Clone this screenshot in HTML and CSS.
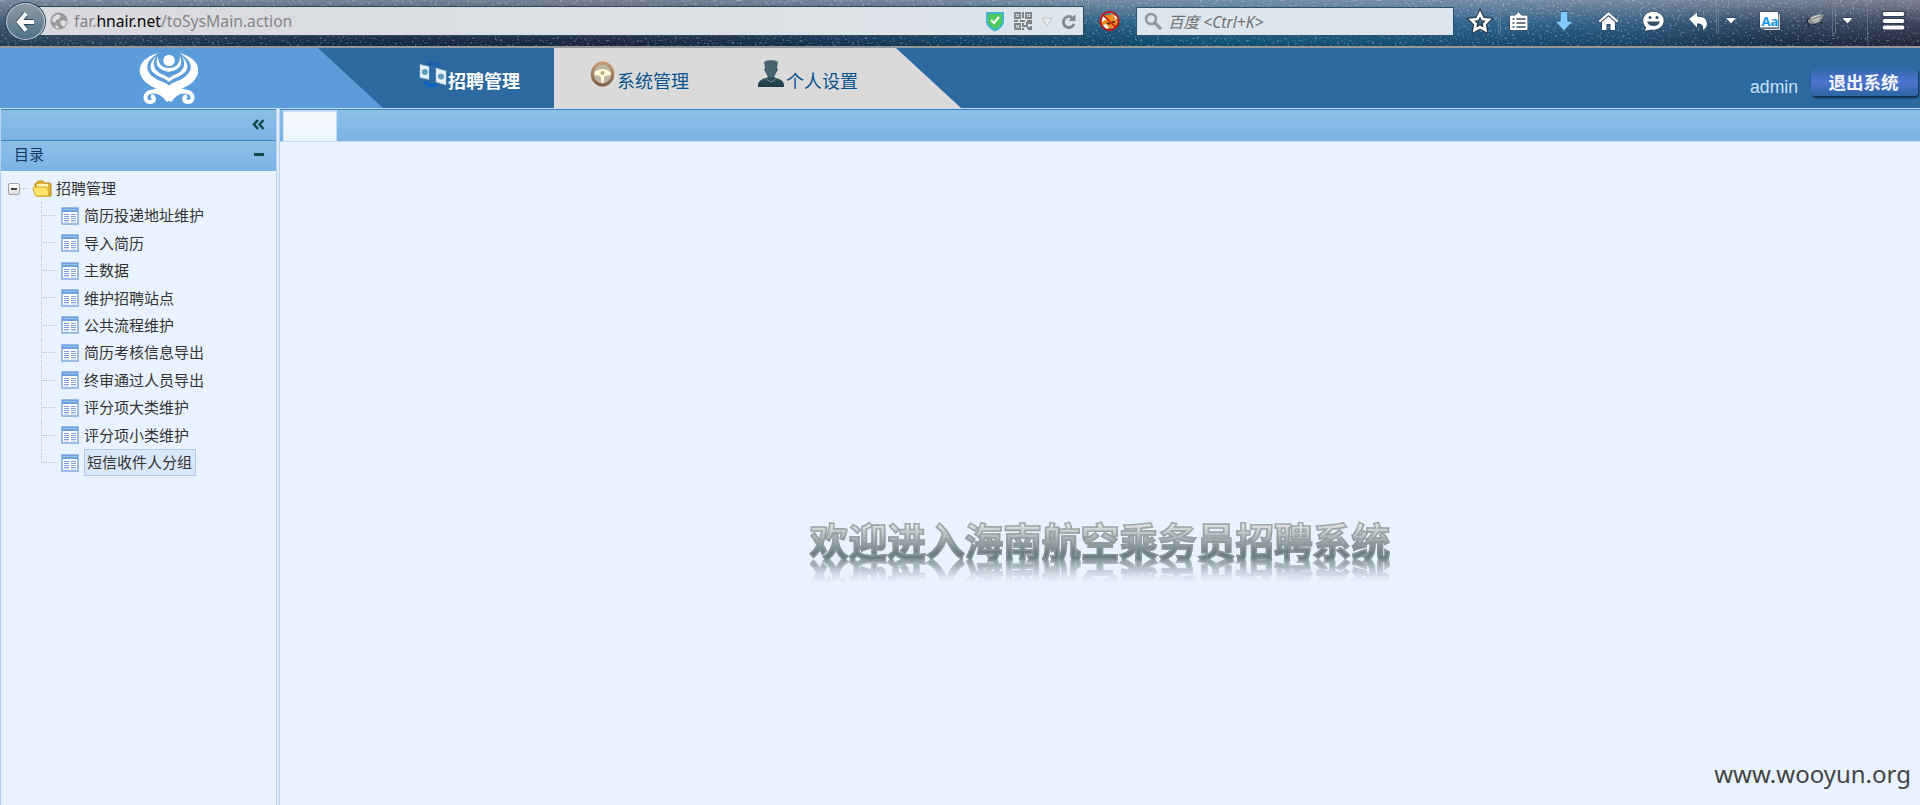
FILE: index.html
```html
<!DOCTYPE html>
<html lang="zh-CN">
<head>
<meta charset="utf-8">
<title>招聘管理</title>
<link rel="stylesheet" href="styles.css">
</head>
<body>
<svg class="defs" width="0" height="0">
  <defs>
    <symbol id="table" viewBox="0 0 18 18">
      <rect x="1" y="1" width="16" height="16" fill="#fff" stroke="#86aee2" stroke-width="1.6"/>
      <rect x="1" y="1" width="16" height="4" fill="#6c9fdd"/><path d="M2 2.500h14" stroke="#9cc2ef"/>
      <path d="M3 7.500h5M10 7.500h5M3 9.500h5M10 9.500h5M3 11.500h5M10 11.500h5M3 13.500h5M10 13.500h5" stroke="#7c9fd9"/>
      <path d="M3 15h5M10 15h5" stroke="#b9cdee"/>
    </symbol>
    <filter id="stars" x="0" y="0" width="100%" height="100%">
      <feTurbulence type="fractalNoise" baseFrequency="0.4" numOctaves="3" seed="8"/>
      <feColorMatrix values="0 0 0 0 .75  0 0 0 0 .88  0 0 0 0 1  5 3 0 0 -4.500"/>
    </filter>
    <linearGradient id="wheel" x2="0" y2="1"><stop stop-color="#c79b73"/><stop offset="1" stop-color="#7e5f45"/></linearGradient>
    <linearGradient id="suit" x2="0" y2="1"><stop stop-color="#4a6d7b"/><stop offset="1" stop-color="#1d3c46"/></linearGradient>
  </defs>
</svg>
<div class="browser">
  <svg class="sky" width="1920" height="46"><rect width="1920" height="46" filter="url(#stars)"/></svg>
  <div class="toolbar">
    <div class="back"><svg width="20" height="22" viewBox="0 0 20 22"><path d="M9.500 3 3 11l6.500 8M4 11h14" fill="none" stroke="#2e4a60" stroke-width="6"/><path d="M10 2.500 3 11l7 8.500M4 11h14" fill="none" stroke="#fff" stroke-width="4.200"/></svg></div>
    <div class="url">
      <svg class="globe" width="18" height="18" viewBox="0 0 18 18"><circle cx="9" cy="9" r="8.600" fill="#999"/><path d="M3 5 8 2l3 2-2 3-3 1-1 3-3-2zM10 9l4-1 3 2-3 5-3-2zM5 13l3 1 1 3-3-1z" fill="#dcdde0"/></svg>
      <span class="address">far.<b>hnair.net</b>/toSysMain.action</span>
      <svg class="urlicons" width="92" height="22" viewBox="0 0 92 22">
        <path d="M0 2h18v10q-1 6-9 9.500Q1 18 0 12z" fill="#3fb6d0"/><path d="M2 4h14v8q-1 4-7 7Q3 16 2 12z" fill="#4fc959"/><path d="m5 10 3 3 5-6" fill="none" stroke="#fff" stroke-width="2"/>
        <g fill="none" stroke="#7d8387" stroke-width="1.800"><path d="M29 3h5v5h-5zM40 3h5v5h-5zM29 14h5v5h-5z"/><path d="M37 2v6M28 11h4m2 0h5m2 0h5M37 13v3h4v-3h5M37 18v2m4-2h2v2m2-4v4" stroke-width="2"/></g><path d="M30.700 4.700h1.600v1.600h-1.600zM41.700 4.700h1.600v1.600h-1.600zM30.700 15.700h1.600v1.600h-1.600z" fill="#7d8387"/>
        <path d="m56 8 5 8.500 5-8.500z" fill="#e8ebee" stroke="#c0c2c6"/>
        <path d="M86 7.500A5.500 5.500 0 1 0 88 14" fill="none" stroke="#858b90" stroke-width="3"/><path d="M89.500 4v7h-7z" fill="#858b90"/>
      </svg>
    </div>
    <svg class="fox" width="22" height="22" viewBox="0 0 22 22"><path d="M3 8q3-4 7-3l3-1 5 2 1 7-4 5-8 1-5-6z" fill="#f08920"/><path d="m4 6 4 3-5 3zm10-1 4 2-1 3zM4 15l3-1 3 4-3 1z" fill="#fff"/><path d="m8 13 3 1m2-2h3" stroke="#40260f" stroke-width="1.500"/><circle cx="10.500" cy="11" r="9.200" fill="none" stroke="#cb1010" stroke-width="1.700"/><path d="m4 5 13 12.500" stroke="#cb1010" stroke-width="1.700"/></svg>
    <div class="search"><svg width="20" height="20" viewBox="0 0 20 20"><circle cx="7" cy="7" r="5" fill="none" stroke="#96999c" stroke-width="2.600"/><path d="m11 11 6 6" stroke="#96999c" stroke-width="3.200"/></svg><i>百度 &lt;Ctrl+K&gt;</i></div>
    <svg class="tools" width="450" height="46" viewBox="1465 0 450 46">
      <g stroke="#26384d" stroke-width="1" paint-order="stroke">
        <path d="m1480 13.500 2.700 5.500 6 .8-4.300 4.200 1 6-5.400-2.900-5.400 2.900 1-6-4.300-4.200 6-.8z" fill="none" stroke-width="5"/><path d="m1480 13.500 2.700 5.500 6 .8-4.300 4.200 1 6-5.400-2.900-5.400 2.900 1-6-4.300-4.200 6-.8z" fill="none" stroke="#fff" stroke-width="2.700"/>
        <path d="M1510 15.500h5l2-1.500 1.500-2 1.500 2 2 1.500h5.500v14.500h-17.500z" fill="#fff"/><path d="M1512.500 19h2m2 0h9m-13 4h2m2 0h9m-13 4h2m2 0h9" stroke="#3d5265" stroke-width="1.600"/>
        <path d="M1560.500 12h7v9.500h5l-8.500 9-8.500-9h5z" fill="#80caff"/>
        <path d="m1608.500 12 10 9-1.500 1.500-8.500-7.500-8.500 7.500-1.500-1.500zM1602 22l6.500-5.500L1615 22v8h-4.500v-6h-4v6h-4.500z" fill="#fff"/>
        <path d="M1644.500 30.500q2-2 1.500-3.500a10.300 9 0 1 1 5 2.500q-3 1-6.500 1z" fill="#fff"/><g fill="#31506a" stroke="none"><circle cx="1650" cy="17.500" r="1.500"/><circle cx="1657" cy="17.500" r="1.500"/><path d="M1647 21.500h13q-1.500 4.500-6.500 4.500t-6.500-4.500z"/></g>
        <path d="m1689 19 8-6.500v4q10 0 10 7 0 4-4 6.500 1.500-7-6-6.500v4z" fill="#fff"/>
        <path d="M1726 18h10l-5 5.500zM1842.500 18h10l-5 5.500z" fill="#fff"/>
        <path d="M1762 14h18v16h-16z" fill="#d5dade"/><path d="M1760 12h18v15.500h-18z" fill="#fff"/><path d="M1761 28.500h17.500V14" fill="none" stroke="#68747e"/>
        <path d="M1884 14h19M1884 21h19M1884 27.500h19" stroke-width="5.500" stroke-linecap="round"/><path d="M1884.500 14h18M1884.500 21h18M1884.500 27.500h18" stroke="#fff" stroke-width="3.800" stroke-linecap="round"/>
      </g>
      <text x="1761.500" y="25.500" class="aa">Aa</text>
      <path d="m1808 19 6-4 8-1 1 3-3 5-7 2-5-1z" fill="#8d908f"/><path d="m1811 18 9-3m-8 6 8-3m-6 5 5-3" stroke="#e4e4df"/><path d="m1809 23-1 5m5-4 3 1m4-3 3 2M1810 18l-3 2 1 3" stroke="#1b2025" fill="none"/>
      <path d="M1498.500 9v24.500h2V9zM1716.500 9v24.500h2V9zM1832.500 9v24.500h3V9z" fill="none" stroke="#7c8e9c" opacity=".6"/><path d="M1867.500 0v42" stroke="#a0aab4" opacity=".35"/>
    </svg>
  </div>
</div>
<header class="banner">
  <svg class="shape" width="961" height="60"><path d="M0 0h318l65 60H0z" fill="#5b9cda"/><path d="M554 0h342l65 60H554z" fill="#dadada"/></svg>
  <div class="brand"><svg width="60" height="56" viewBox="0 0 60 56">
    <g fill="#fff"><circle cx="31" cy="10.500" r="5.800"/>
    <path d="M21 3C-4 9-4 29 17 38c7 3 11 6 13.800 11.500C33.500 44 38 41 45 38 66 29 66 9 41 3c15 8 16 19 1 27-5 2-8 3-11 5.500C28 33 25 32 20 30 5 22 6 11 21 3z"/>
    <path d="M18 6C7 18 14 24 27 29l4 3 4-3C48 24 55 18 44 6c5 10 1 16-9 19.500l-4 2.500-4-2.500C17 22 13 16 18 6z"/>
    <path d="M20 6c-4 9 1 14 11 16 10-2 15-7 11-16 0 8-4 12-11 12S20 14 20 6z"/></g>
    <path d="M29 47q-5-7-13-6M33 47q5-7 13-6" fill="none" stroke="#fff" stroke-width="4"/>
    <path d="M30.500 51Q24 41 15 41.500c-9 .5-10 10.500-3 10.500 5 0 5-5 1-6M31.500 51Q38 41 47 41.500c9 .5 10 10.500 3 10.500-5 0-5-5-1-6" fill="none" stroke="#fff" stroke-width="4"/>
  </svg></div>
  <nav class="menu">
    <a class="active"><svg width="28" height="26" viewBox="0 0 28 26"><path d="M8 3q7-5 13 2" fill="none" stroke="#1c5fae" stroke-width="3"/><path d="M6 20q5 6 12 2" fill="none" stroke="#0863ca" stroke-width="3"/><path d="m1 2.500 9 2v13l-9-2zM17 6l10 3v14l-10-3z" fill="#e8f2f8" stroke="#a8c1d6" stroke-width=".6"/><circle cx="5.800" cy="10" r="3" fill="#5c9ebc"/><circle cx="22" cy="14.500" r="3" fill="#5c9ebc"/></svg><span>招聘管理</span></a>
    <a class="system"><svg width="26" height="28" viewBox="0 0 26 28"><ellipse cx="13" cy="16" rx="10.500" ry="11" fill="#999" opacity=".35"/><ellipse cx="12.500" cy="14" rx="10.300" ry="11" fill="#bcb3a5" stroke="url(#wheel)" stroke-width="3"/><path d="M4.500 12q8-6 16 0v3l-6 1-1 7h-2l-1-7-6-1z" fill="#fffbd7"/><circle cx="12.500" cy="13" r="2" fill="#b5aa8a"/></svg><span>系统管理</span></a>
    <a class="personal"><svg width="28" height="30" viewBox="0 0 28 30"><path d="M1 28q-1-7 8-9l2-1-1-2-2-4-1-1 1-2-1-6q2-2 7-2t7 2l-1 6 1 2-1 1-2 4-1 2 2 1q9 2 8 9z" fill="url(#suit)"/><path d="M10 3q4-2 8 0l1 9-2 5q-3 2-6 0l-2-5z" fill="#47636c"/><path d="m9 20 5 3 5-3" fill="none" stroke="#6b8992"/></svg><span>个人设置</span></a>
  </nav>
  <div class="account"><span>admin</span><button>退出系统</button></div>
</header>
<div class="workspace">
  <aside>
    <div class="bar"><svg width="13" height="11" viewBox="0 0 13 11"><path d="M6 1 2 5.500 6 10M11.500 1l-4 4.500 4 4.500" fill="none" stroke="#13494d" stroke-width="2.500"/></svg></div>
    <div class="bar catalog"><span>目录</span><i></i></div>
    <div class="tree">
      <div class="root"><span class="toggle"></span><span class="dots"></span><svg width="21" height="18" viewBox="0 0 21 18"><path d="M3 4q0-1 2-1l1-2h5l1 2h5q2 0 2 2v11H4z" fill="#e5b42d" stroke="#b78916"/><path d="M5 4h11v4H5z" fill="#fff5b4"/><path d="m1 8 1-1h13l1 2 1 6-1 1H4l-1-1z" fill="#ffe66b" stroke="#d6a624"/></svg><span>招聘管理</span></div>
      <ul>
        <li><svg><use href="#table"/></svg><span>简历投递地址维护</span></li>
        <li><svg><use href="#table"/></svg><span>导入简历</span></li>
        <li><svg><use href="#table"/></svg><span>主数据</span></li>
        <li><svg><use href="#table"/></svg><span>维护招聘站点</span></li>
        <li><svg><use href="#table"/></svg><span>公共流程维护</span></li>
        <li><svg><use href="#table"/></svg><span>简历考核信息导出</span></li>
        <li><svg><use href="#table"/></svg><span>终审通过人员导出</span></li>
        <li><svg><use href="#table"/></svg><span>评分项大类维护</span></li>
        <li><svg><use href="#table"/></svg><span>评分项小类维护</span></li>
        <li><svg><use href="#table"/></svg><span class="selected">短信收件人分组</span></li>
      </ul>
    </div>
  </aside>
  <main>
    <div class="tabs"><div class="tab"></div></div>
    <div class="content"><h1>欢迎进入海南航空乘务员招聘系统</h1></div>
    <div class="watermark">www.wooyun.org</div>
  </main>
</div>
</body>
</html>
```
FILE: styles.css
```css
* { box-sizing: border-box; }
body { margin: 0; width: 1920px; height: 805px; overflow: hidden; background: #e9f3ff; font-family: "Noto Sans", "Noto Sans CJK SC", sans-serif; color: #333; }
.defs { position: absolute; }
svg { flex-shrink: 0; }
.browser { position: relative; height: 48px; border-bottom: 2px solid #999; overflow: hidden; background: linear-gradient(180deg, rgba(150,155,172,.75), rgba(85,102,128,.35) 50%, rgba(0,8,25,.3)), linear-gradient(90deg, #34536b, #173452 20%, #25304a 32%, #155077 50%, #146b96 64%, #1d6597 76%, #225a83 85%, #203b58 92%, #323247); }
.sky { position: absolute; left: 0; top: 0; opacity: .28; }
.toolbar { position: relative; display: flex; height: 46px; }
.back { z-index: 1; margin: 3px 0 0 6px; width: 39px; height: 37px; border-radius: 50%; background: linear-gradient(#9299a4, #4d7287); border: 1px solid #bfc7d0; box-shadow: 0 0 0 1px #25405a; display: flex; align-items: center; justify-content: center; }
.url { margin: 7px 0 0 -6px; width: 1044px; height: 28px; background: linear-gradient(90deg, #d8dade, #dde0e4 65%, #dce6ed); box-shadow: 0 0 0 1px #314859; display: flex; align-items: center; padding-left: 11px; }
.address { margin-left: 6px; font-size: 15.7px; line-height: 26px; color: #858585; white-space: nowrap; }
.address b { font-weight: 400; color: #080808; }
.urlicons { margin-left: auto; margin-right: 5px; }
.fox { margin: 10px 0 0 16px; }
.search { margin: 8px 0 0 16px; width: 316px; height: 27px; background: #dce6ef; box-shadow: 0 0 0 1px #31506b; display: flex; align-items: center; padding-left: 7px; font-size: 15.6px; color: #707173; }
.search i { margin-left: 4px; }
.tools { margin-left: 12px; }
.aa { font: bold 13px "Noto Sans", sans-serif; fill: #1595ed; }
.banner { position: relative; display: flex; height: 60px; background: #2c69a0; }
.shape { position: absolute; left: 0; top: 0; }
.brand { position: relative; width: 383px; padding: 2px 0 0 138px; }
.menu { position: relative; display: flex; font-size: 18px; line-height: 26px; color: #07528c; }
.menu a { display: flex; white-space: nowrap; }
.menu span { margin-top: 20px; }
.active { width: 171px; padding-left: 36px; color: #fff; font-weight: 700; }
.active svg { margin-top: 14px; }
.active span { margin-left: 1px; }
.system { width: 171px; padding-left: 36px; }
.system svg { margin: 12px 1px 0 0; }
.personal { padding-left: 33px; }
.personal svg { margin: 11px 0 0 -1px; }
.personal span { margin-left: 1px; }
.account { margin-left: auto; display: flex; font: 17.6px/24px "Liberation Sans", sans-serif; color: #c9e1fa; padding-right: 2px; }
.account span { margin: 27px 13px 0 0; }
.account button { margin-top: 20px; width: 107px; height: 28px; padding: 0 2px 0 0; border: 0; border-radius: 4px; color: #f4f6ff; font: 700 17.5px/26px "Noto Sans CJK SC", sans-serif; background: linear-gradient(#2f68a3, #5073d2 50%, #2d66a0); box-shadow: 1px 2px 2px #102c48; }
.workspace { display: grid; grid-template-columns: 277px 1fr; column-gap: 2px; height: 697px; border-top: 1px solid #c5daf5; background: #e4eefb; }
aside { border: solid #b6d0f2; border-width: 0 1px; background: #e9f3ff; }
.bar { height: 31px; border-top: 1px solid #3c83bd; background: linear-gradient(#8bbfe6, #85b9e7 50%, #79b3e2); display: flex; align-items: center; justify-content: flex-end; padding: 0 11px 1px 0; }
.catalog { justify-content: space-between; padding-left: 13px; padding-right: 12px; font-size: 15px; color: #15355e; }
.catalog span { margin-top: -4px; }
.catalog i { width: 10px; height: 3px; background: #13494d; margin-top: -3px; }
.tree { padding: 4px 0 0 7px; font-size: 15px; line-height: 24px; }
.root { display: flex; height: 27px; align-items: center; }
.toggle { position: relative; width: 12px; height: 12px; border: 1px solid #a3a3a3; border-radius: 2px; background: linear-gradient(#fff, #ddd); }
.toggle::after { content: ""; position: absolute; left: 2px; top: 4px; width: 6px; height: 2px; background: #444; }
.dots { width: 7px; margin: 0 4px 0 1px; border-top: 1px dotted #b8bcc2; }
.root svg + span { margin-left: 3px; margin-top: -2px; }
ul { list-style: none; margin: 0 0 0 33px; padding: 0; }
li { position: relative; display: flex; align-items: center; height: 27.45px; padding-left: 20px; }
li::before { content: ""; position: absolute; left: 0; top: 0; height: 28px; border-left: 1px dotted #bec3ca; }
li:last-child::before { height: 14px; }
li::after { content: ""; position: absolute; left: 2px; top: 13px; width: 12px; border-top: 1px dotted #b9bfc7; }
li svg { width: 18px; height: 18px; }
li span { margin: -1px 0 0 5px; white-space: nowrap; }
li .selected { margin-top: -1px; padding: 0 3px 0 2px; height: 27px; border: 1px solid #b1c9ee; background: #dae8fb; }
main { position: relative; display: flex; flex-direction: column; border-left: 1px solid #b6d0f2; background: #e9f3ff; }
.tabs { height: 33px; border-top: 1px solid #3c83bd; border-bottom: 1px solid #bcd8f5; background: linear-gradient(#8bbfe6, #85b9e7 50%, #79b3e2); padding-left: 3px; }
.tab { width: 54px; height: 31px; background: linear-gradient(#f8faff, #eaf3fe); border: solid #cadcf5; border-width: 2px 1px 0; box-shadow: inset 1px 0 #fff; }
.content { flex: 1; display: flex; justify-content: center; padding-top: 371px; }
h1 { margin: 0; height: 49px; font: 700 38.7px/52px "Noto Sans CJK SC", sans-serif; white-space: nowrap; color: transparent; background: linear-gradient(#e8e9e9 20%, #b7bfc2 45%, #6e7e83 80%); background-clip: text; -webkit-text-stroke: 1.6px #8f999ccc; -webkit-box-reflect: below -6px linear-gradient(transparent 46%, #000c 94%); }
.watermark { position: absolute; right: 9px; bottom: 14px; font-size: 24px; line-height: 34px; color: #444; }
```
